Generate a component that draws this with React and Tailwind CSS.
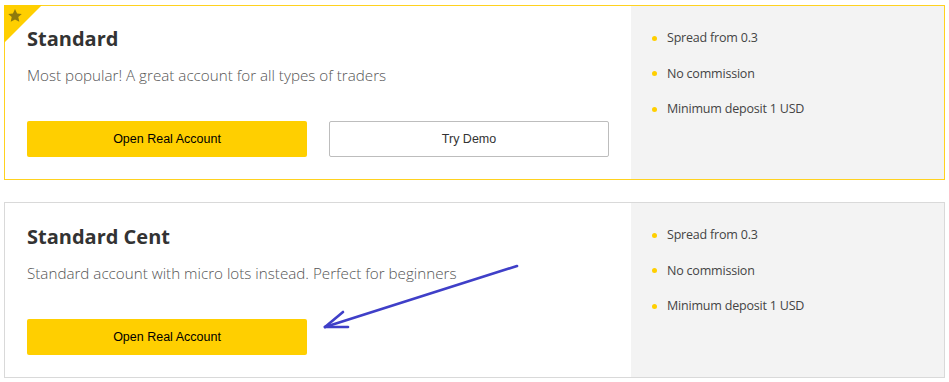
import React from "react";

const features = ["Spread from 0.3", "No commission", "Minimum deposit 1 USD"];

function Features() {
  return (
    <div className="w-[313px] shrink-0 bg-[#f3f3f3] pl-[21px] pt-[22px]">
      <ul className="flex flex-col gap-[15.5px]">
        {features.map((f) => (
          <li key={f} className="flex items-center h-[20px] text-[12.5px] leading-[20px] tracking-[-0.2px] text-[#444]">
            <span className="w-[5px] h-[5px] rounded-full bg-[#ffcf00] mr-[10px]" />
            {f}
          </li>
        ))}
      </ul>
    </div>
  );
}

function Star() {
  return (
    <svg className="absolute -left-px -top-px" width="40" height="40" viewBox="0 0 40 40">
      <polygon points="0,0 38,0 0,38" fill="#ffcf00" />
      <polygon
        fill="#8f7a0c"
        points="11,4 13.1,8.4 17.8,8.9 14.3,12.1 15.3,16.8 11,14.4 6.7,16.8 7.7,12.1 4.2,8.9 8.9,8.4"
      />
    </svg>
  );
}

function Card({ title, desc, demo, featured }) {
  return (
    <div
      className={
        "relative flex border " +
        (featured ? "h-[175px] border-[#ffd21f]" : "h-[176px] border-[#d9d9d9]")
      }
    >
      {featured && <Star />}
      <div className="flex-1 pl-[22px] pr-[22px]">
        <h2
          className={
            (featured ? "mt-[19px]" : "mt-[20px]") +
            " text-[20px] leading-[28px] font-bold text-[#333]"
          }
        >
          {title}
        </h2>
        <p className="mt-[12px] text-[15.2px] leading-[20px] text-[#555] font-light">{desc}</p>
        <div className="mt-[36px] flex gap-[22px]">
          <button className="w-[280px] h-[36px] rounded-[2px] bg-[#ffcf00] text-[12.5px] text-black font-['Liberation_Sans',Arial,sans-serif]">
            Open Real Account
          </button>
          {demo && (
            <button className="w-[280px] h-[36px] rounded-[2px] border border-[#bdbdbd] bg-white text-[12.5px] text-[#333] font-['Liberation_Sans',Arial,sans-serif]">
              Try Demo
            </button>
          )}
        </div>
      </div>
      <Features />
    </div>
  );
}

export default function App() {
  return (
    <div className="relative w-[949px] h-[382px] bg-white font-['Open_Sans',sans-serif]">
      <div className="pl-[4px] pt-[5px] w-[945px] flex flex-col gap-[22px]">
        <Card
          featured
          demo
          title="Standard"
          desc="Most popular! A great account for all types of traders"
        />
        <Card
          title="Standard Cent"
          desc="Standard account with micro lots instead. Perfect for beginners"
        />
      </div>
      <svg className="absolute left-0 top-0 pointer-events-none" width="949" height="382">
        <g stroke="#3f3fc8" strokeWidth="2.6" strokeLinecap="round" fill="none">
          <line x1="517" y1="266" x2="325" y2="327" />
          <line x1="325" y1="327" x2="343" y2="312" />
          <line x1="325" y1="327" x2="348" y2="327" />
        </g>
      </svg>
    </div>
  );
}
